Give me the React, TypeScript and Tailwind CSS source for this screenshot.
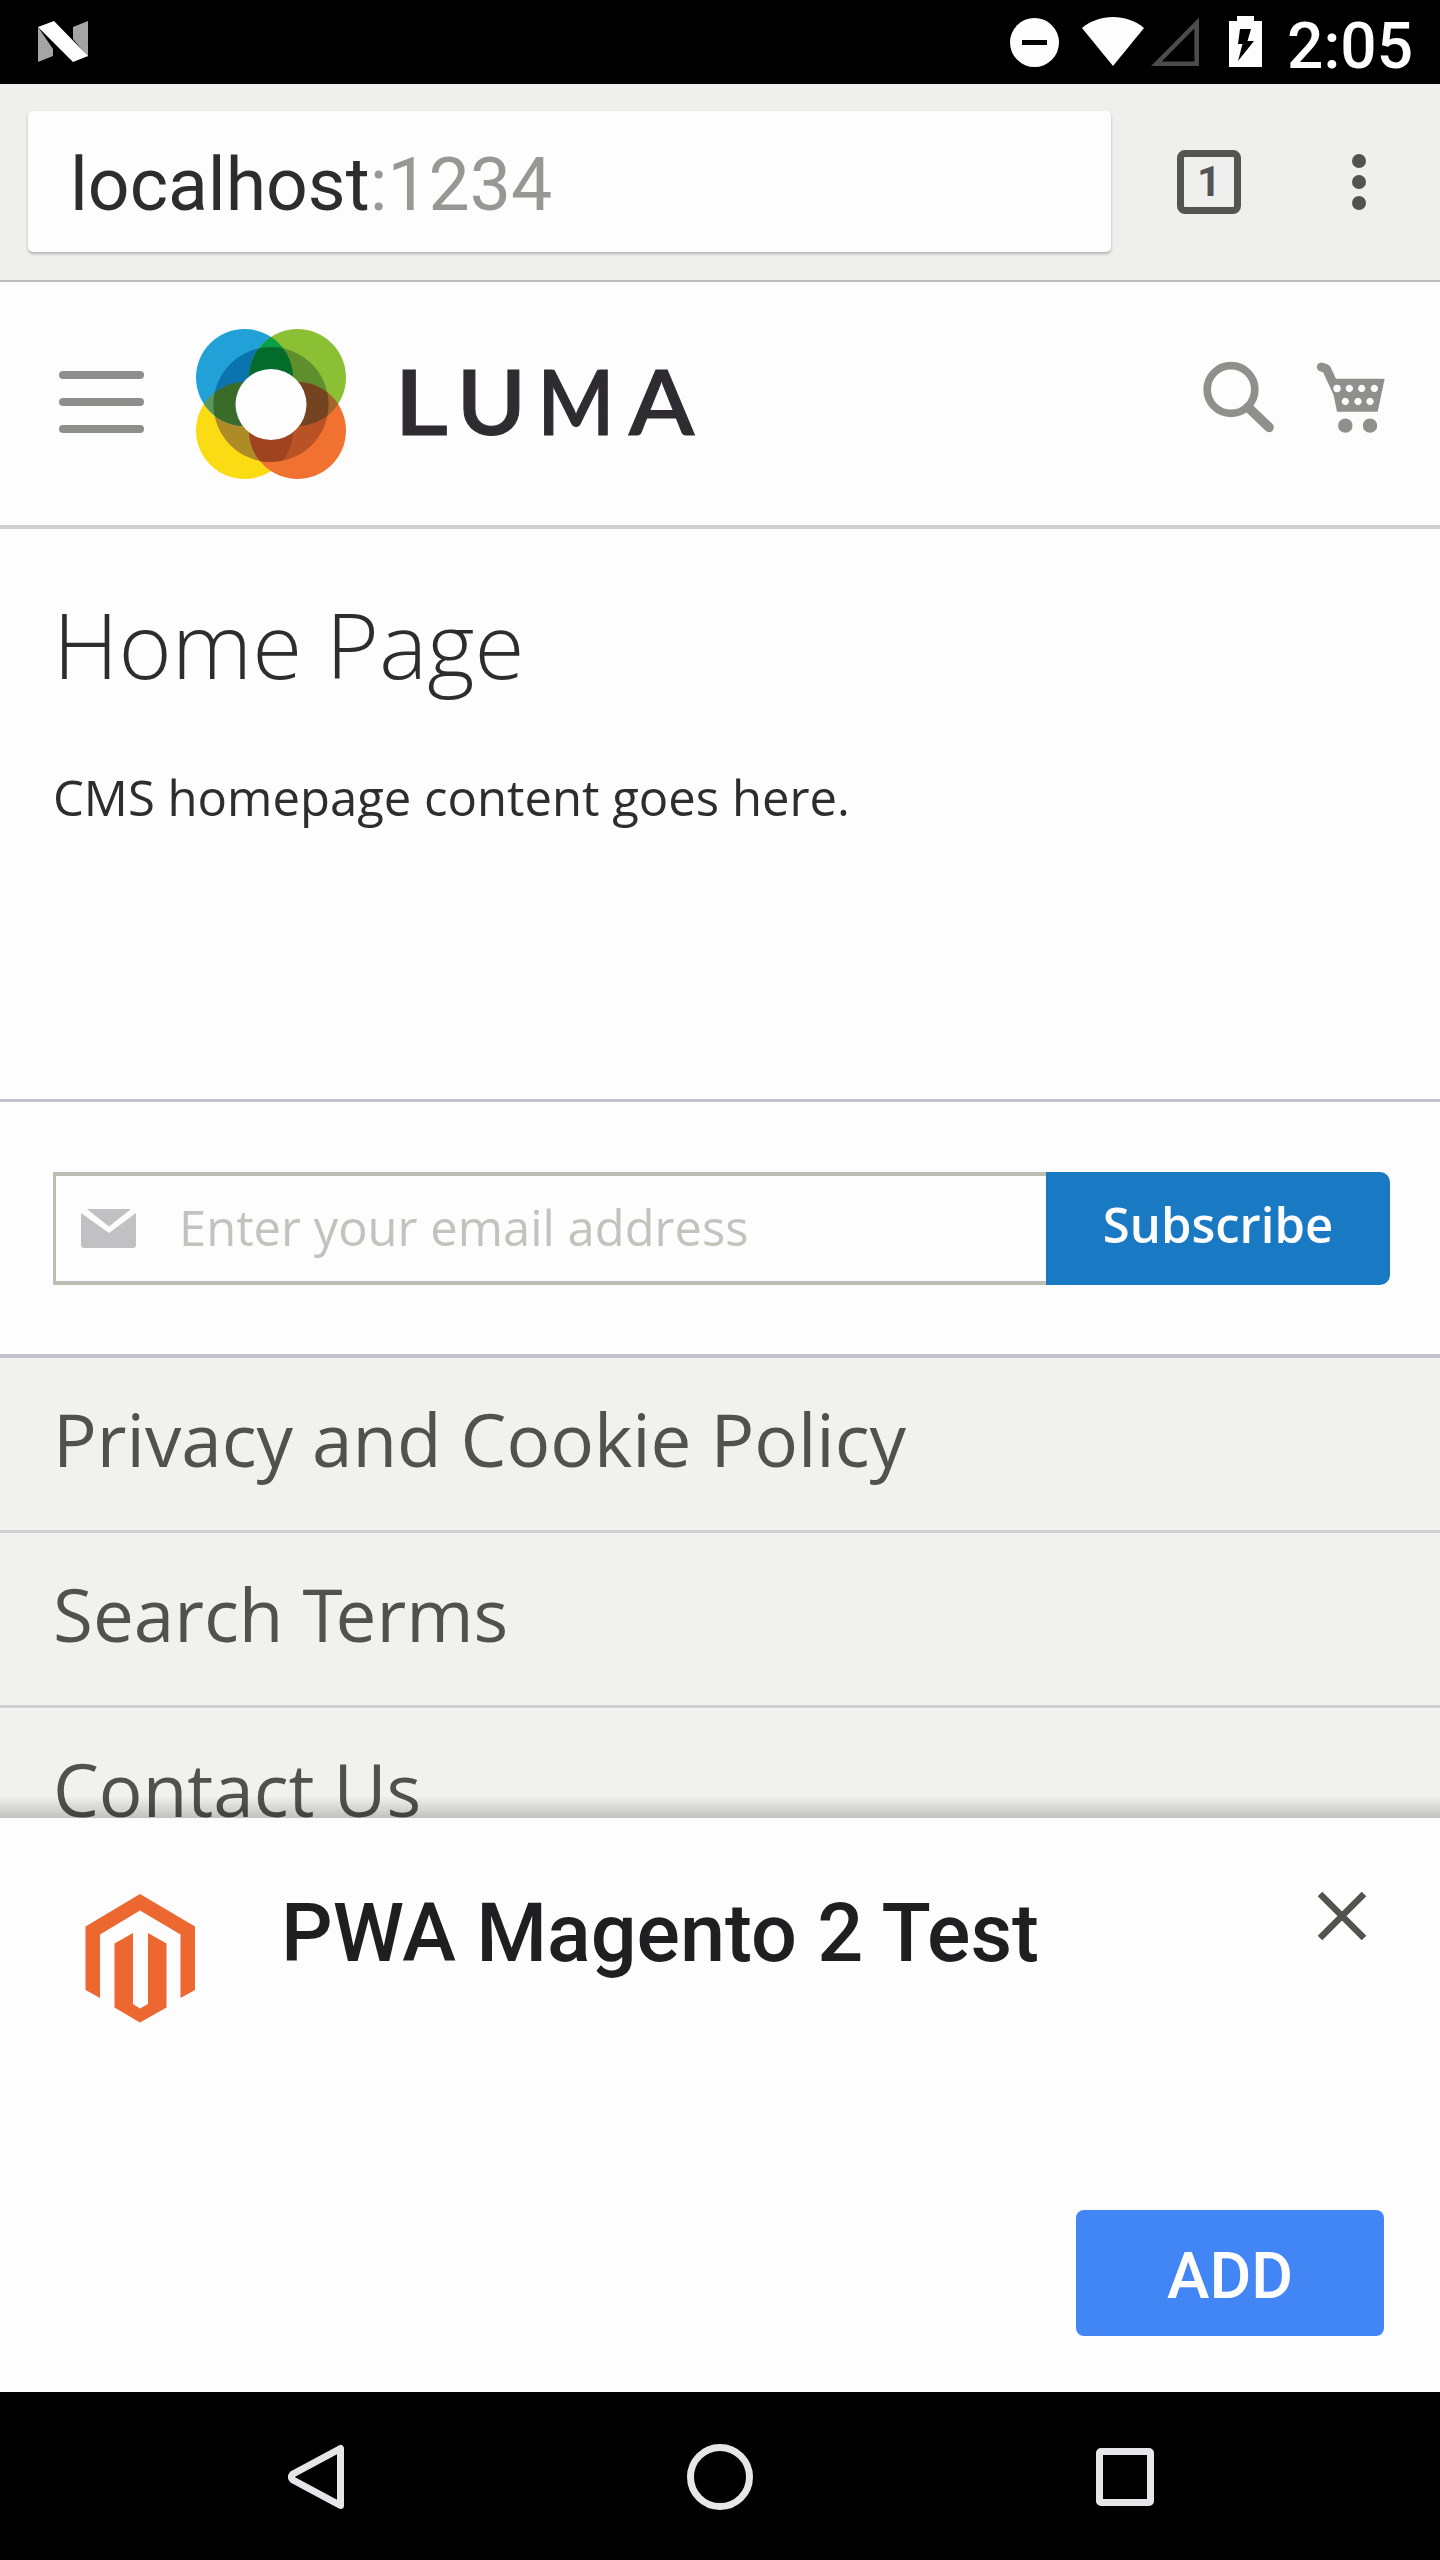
import type { ReactNode } from 'react'

function StatusBar() {
  return (
    <div className="flex h-[84px] shrink-0 items-start justify-end bg-black pl-[38px] pr-[27px] pt-[16px] text-[#fdfdfe]">
      <svg className="mr-auto mt-[5px]" width="51" height="42" viewBox="0 0 51 42">
        <path d="M0 6L15 28V35L0 41Z" fill="#a5a5a3" />
        <path d="M50 0L35 6V18L50 36Z" fill="#a5a5a3" />
        <path d="M0 6L16 0L50 35L35 41Z" fill="#fdfdfe" />
      </svg>
      <svg className="mr-[23px]" width="49" height="52" viewBox="0 0 49 52">
        <circle cx="24.5" cy="26.5" r="24.5" fill="currentColor" />
        <rect x="12" y="24" width="25" height="5" fill="#000" />
      </svg>
      <svg className="mr-[7px]" width="62" height="52" viewBox="0 0 62 52">
        <path d="M0 12C9 4.500 20 1 31 1S53 4.500 62 12L31 50Z" fill="currentColor" />
      </svg>
      <svg className="mr-[30px]" width="48" height="52" viewBox="0 0 48 52">
        <path d="M45.700 7V47.700H5.500Z" fill="none" stroke="#4c4c4b" strokeWidth="4.600" />
      </svg>
      <svg className="mr-[25px]" width="33" height="52" viewBox="0 0 33 52">
        <path fillRule="evenodd" fill="currentColor" d="M0 5H8V0H25V5H33V51H0ZM11 13L9 28H13.500L9 45L25 25H18.500L22 13Z" />
      </svg>
      <span className="mt-[-11px] font-[Roboto] text-[64px] font-medium leading-[84px]">2:05</span>
    </div>
  )
}

function BrowserToolbar() {
  return (
    <div className="flex h-[198px] shrink-0 items-start border-b-2 border-[#bdbdb8] bg-[#efefee] pl-[28px] pt-[27px] font-[Roboto]">
      <div className="h-[141px] w-[1083px] rounded-[5px] bg-[#fdfdfe] pl-[42px] pt-[5px] text-[73.3px] leading-[138px] text-[#2d2d2b] shadow-[0_2px_3px_rgba(0,0,0,0.25)]">
        localhost<span className="text-[#979794]">:1234</span>
      </div>
      <div className="ml-[66px] mt-[39px] flex size-[64px] items-center justify-center rounded-[8px] border-[7px] border-[#545453] text-[42px] font-bold leading-[50px] text-[#545453]">
        1
      </div>
      <div className="ml-[111px] mt-[43px] flex flex-col gap-[7px]">
        {[0, 1, 2].map((i) => (
          <div key={i} className="size-[14px] rounded-full bg-[#525251]" />
        ))}
      </div>
    </div>
  )
}

function LumaMark() {
  return (
    <svg width="150" height="151" viewBox="196 329 150 151">
      <defs>
        <clipPath id="tl"><circle cx="244.500" cy="377.500" r="48.500" /></clipPath>
        <clipPath id="tr"><circle cx="297.500" cy="377.500" r="48.500" /></clipPath>
        <clipPath id="bl"><circle cx="244.500" cy="430.500" r="48.500" /></clipPath>
        <clipPath id="br"><circle cx="297.500" cy="430.500" r="48.500" /></clipPath>
        <clipPath id="ring"><circle cx="271" cy="404.500" r="57.500" /></clipPath>
      </defs>
      <circle cx="244.500" cy="430.500" r="48.500" fill="#fbdb14" />
      <circle cx="244.500" cy="377.500" r="48.500" fill="#22a1d8" />
      <circle cx="297.500" cy="377.500" r="48.500" fill="#8bc034" />
      <circle cx="297.500" cy="430.500" r="48.500" fill="#f17130" />
      <g clipPath="url(#tl)">
        <circle cx="297.500" cy="377.500" r="48.500" fill="#08a045" />
        <circle cx="244.500" cy="430.500" r="48.500" fill="#5c9659" />
      </g>
      <g clipPath="url(#br)">
        <circle cx="297.500" cy="377.500" r="48.500" fill="#a0652a" />
      </g>
      <g clipPath="url(#ring)">
        <g clipPath="url(#bl)"><rect x="196" y="329" width="150" height="151" fill="#ad8c27" /></g>
        <g clipPath="url(#tl)"><rect x="196" y="329" width="150" height="151" fill="#0b74ae" /></g>
        <g clipPath="url(#tr)"><rect x="196" y="329" width="150" height="151" fill="#5f8e2d" /></g>
        <g clipPath="url(#br)"><rect x="196" y="329" width="150" height="151" fill="#b95224" /></g>
        <g clipPath="url(#tl)">
          <circle cx="297.500" cy="377.500" r="48.500" fill="#046c2a" />
          <circle cx="244.500" cy="430.500" r="48.500" fill="#396c29" />
        </g>
        <g clipPath="url(#br)">
          <circle cx="297.500" cy="377.500" r="48.500" fill="#744420" />
          <circle cx="244.500" cy="430.500" r="48.500" fill="#9f4320" />
        </g>
      </g>
      <circle cx="271" cy="404.500" r="35.500" fill="#fdfdfe" />
    </svg>
  )
}

function StoreHeader() {
  return (
    <header className="flex h-[247px] shrink-0 items-start border-b-4 border-[#d0d0d1] pl-[59px]">
      <div className="mt-[89px] flex w-[85px] flex-col gap-[19px]">
        {[0, 1, 2].map((i) => (
          <div key={i} className="h-[8px] rounded-full bg-[#8e8e8c]" />
        ))}
      </div>
      <div className="ml-[52px] mt-[47px]">
        <LumaMark />
      </div>
      <div className="ml-[46px] mt-[68px] flex font-[Lato] text-[91px] font-semibold leading-[100px] text-[#2e2c31] [-webkit-text-stroke:1px_#2e2c31]">
        <span className="w-[58px] scale-x-[1.140] text-center">L</span>
        <span className="w-[83px] scale-x-[1.030] text-center">U</span>
        <span className="w-[86px] scale-x-[0.900] text-center">M</span>
        <span className="w-[85px] scale-x-[1.050] text-center">A</span>
      </div>
      <svg className="ml-auto mr-[52px] mt-[78px]" width="185" height="76" viewBox="190 90 555 228">
        <g fill="none" stroke="#8f8f8c">
          <circle cx="274" cy="178.500" r="71.500" strokeWidth="23" />
          <path d="M325 232L388 292" strokeWidth="29" strokeLinecap="round" />
          <path d="M545 111L560 116L592 185" strokeWidth="27" strokeLinecap="round" strokeLinejoin="round" />
        </g>
        <path
          fillRule="evenodd"
          fill="#8f8f8c"
          d="M572 146H735L714 245H592ZM592 164.500a11 11 0 1 0 .1 0ZM629 164.500a11 11 0 1 0 .1 0ZM666 164.500a11 11 0 1 0 .1 0ZM704 164.500a11 11 0 1 0 .1 0ZM617 203.500a11 11 0 1 0 .1 0ZM655 203.500a11 11 0 1 0 .1 0ZM691 203.500a11 11 0 1 0 .1 0Z"
        />
        <circle cx="592" cy="175.500" r="11" fill="#fdfdfe" />
        <circle cx="617" cy="287" r="21.500" fill="#8f8f8c" />
        <circle cx="691" cy="287" r="21.500" fill="#8f8f8c" />
      </svg>
    </header>
  )
}

function Newsletter() {
  return (
    <section className="h-[259px] shrink-0 border-b-4 border-t-[3px] border-[#c2c2ca] pl-[53px] pt-[70px]">
      <div className="flex h-[113px] w-[1337px]">
        <div className="flex w-[993px] items-center border-y-4 border-l-[3px] border-[#bdbdb4] pl-[25px]">
          <svg width="55" height="39" viewBox="0 0 55 39">
            <path d="M6 0H50L28 17.500Z" fill="#c1c1c3" />
            <path d="M0 4L28 24L55 4V36Q55 39 52 39H3Q0 39 0 36Z" fill="#c1c1c3" />
          </svg>
          <span className="ml-[43px] mt-[-4px] text-[48.9px] leading-[60px] text-[#c3c3be]">Enter your email address</span>
        </div>
        <button className="w-[344px] rounded-r-[10px] bg-[#1979c3] pb-[8px] text-center text-[49px] font-semibold leading-[105px] text-[#fdfdfe]">
          Subscribe
        </button>
      </div>
    </section>
  )
}

function FooterLink({ children }: { children: ReactNode }) {
  return <div className="h-[175px] border-b-[3px] border-[#cfcfcf] pl-[53px] leading-[161px]">{children}</div>
}

function FooterLinks() {
  return (
    <footer className="relative h-[460px] shrink-0 overflow-hidden bg-[#f1f1f0] text-[72.8px] text-[#515150]">
      <FooterLink>Privacy and Cookie Policy</FooterLink>
      <FooterLink>
        Search <span className="tracking-[-7px]">T</span>erms
      </FooterLink>
      <FooterLink>Contact Us</FooterLink>
      <div className="absolute inset-x-0 bottom-0 h-[22px] bg-gradient-to-b from-black/0 to-black/20" />
    </footer>
  )
}

function InstallBanner() {
  return (
    <section className="flex h-[574px] shrink-0 flex-col font-[Roboto]">
      <div className="flex h-[392px] items-start pl-[85px] pr-[73px]">
        <svg className="mt-[76px]" width="111" height="129" viewBox="0 0 111 129">
          <g fill="#ed6730">
            <path d="M55 0L110 32.500V96L95.500 104V40.500L55 16.500L15 40.500V104L.5 96V32.500Z" />
            <path d="M48 39V110L55 114.500L63 110V39L81.500 49.500V113.500L55 128.500L29.500 113.500V49.500Z" />
          </g>
        </svg>
        <h2 className="ml-[85px] mt-[66px] text-[81px] font-medium leading-[100px] text-[#1f1f21]">PWA Magento 2 Test</h2>
        <svg className="ml-auto mt-[73px]" width="50" height="50" viewBox="0 0 50 50">
          <path d="M3 3L47 47M47 3L3 47" stroke="#52524f" strokeWidth="6.500" />
        </svg>
      </div>
      <button className="ml-[1076px] h-[126px] w-[308px] rounded-[8px] bg-[#4285f4] pt-[6px] text-[64px] font-medium leading-[120px] text-[#fdfdfe]">
        <span className="relative top-px">ADD</span>
      </button>
    </section>
  )
}

function NavigationBar() {
  return (
    <nav className="flex h-[168px] shrink-0 items-center bg-black pl-[288px] pt-[2px]">
      <svg width="57" height="66" viewBox="0 0 57 66">
        <path d="M52.500 4.500V61.500L5 36Q2 33 5 30Z" fill="none" stroke="#e6e6e8" strokeWidth="7" strokeLinejoin="round" />
      </svg>
      <div className="ml-[342px] size-[66px] rounded-full border-[7px] border-[#e6e6e8]" />
      <div className="ml-[343px] size-[58px] rounded-[5px] border-[7px] border-[#e6e6e8]" />
    </nav>
  )
}

export default function App() {
  return (
    <div className="flex h-[2560px] w-[1440px] flex-col overflow-hidden bg-[#fdfdfe] font-['Open_Sans',sans-serif]">
      <StatusBar />
      <BrowserToolbar />
      <StoreHeader />
      <main className="h-[570px] shrink-0 pl-[53px] pt-[65px] text-[#2d2d2d]">
        <h1 className="text-[91px] font-light leading-[100px]">Home Page</h1>
        <p className="mt-[68px] text-[49px] leading-[70px]">CMS homepage content goes here.</p>
      </main>
      <Newsletter />
      <FooterLinks />
      <InstallBanner />
      <NavigationBar />
    </div>
  )
}
